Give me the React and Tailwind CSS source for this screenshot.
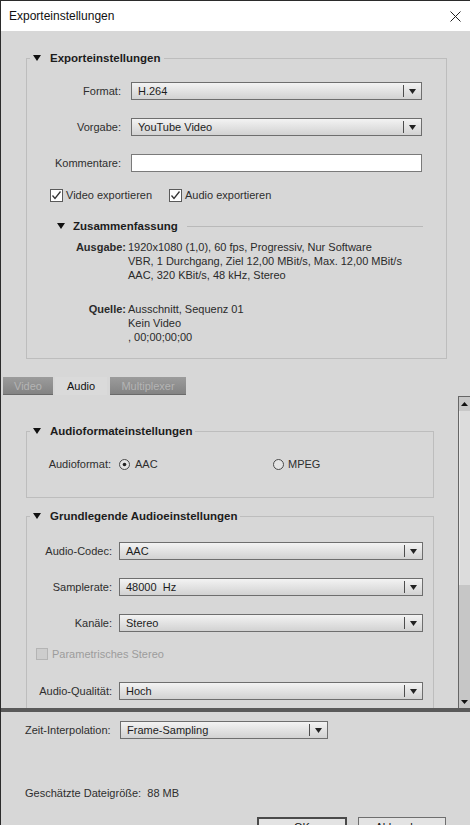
import React from 'react';

const Tri = ({ className = '' }) => (
  <svg width="8" height="6" viewBox="0 0 8 6" className={className}>
    <polygon points="0,0 8,0 4,6" fill="#111" />
  </svg>
);

const SmallArrow = () => (
  <svg width="7" height="5" viewBox="0 0 7 5">
    <polygon points="0,0 7,0 3.5,5" fill="#222" />
  </svg>
);

function Select({ value, className }) {
  return (
    <div className={`h-[18px] border border-[#6e6e6e] bg-linear-to-b from-[#f3f3f3] to-[#d2d2d2] flex items-center text-[#1c1c1c] ${className}`}>
      <span className="flex-1 pl-[6px] whitespace-pre">{value}</span>
      <span className="w-px h-[12px] bg-[#4d4d4d]" />
      <span className="w-[17px] flex justify-center">
        <SmallArrow />
      </span>
    </div>
  );
}

const Check = () => (
  <svg width="13" height="13" viewBox="0 0 13 13">
    <rect x="0.5" y="0.5" width="12" height="12" fill="#fff" stroke="#5a5a5a" />
    <path d="M2.5 6.5 L5 9.5 L10.5 2.5" fill="none" stroke="#333" strokeWidth="1.3" />
  </svg>
);

function Radio({ checked }) {
  return (
    <svg width="11" height="11" viewBox="0 0 11 11">
      <circle cx="5.5" cy="5.5" r="5" fill="#e4e4e4" stroke="#4a4a4a" />
      {checked && <circle cx="5.5" cy="5.5" r="1.8" fill="#222" />}
    </svg>
  );
}

function Legend({ children }) {
  return (
    <legend className="ml-[3px] px-[3px] h-[16px]">
      <span className="flex items-center h-[16px] gap-[9px] font-bold text-[11.5px] text-[#1c1c1c]">
        <Tri />
        {children}
      </span>
    </legend>
  );
}

function Row({ label, labelW, gap, children, className = '' }) {
  return (
    <div className={`flex items-center h-[18px] ${className}`}>
      <span className={`text-right text-[#2e2e2e] ${labelW}`}>{label}</span>
      <span className={gap} />
      {children}
    </div>
  );
}

export default function App() {
  return (
    <div className="w-[470px] h-[825px] overflow-hidden bg-[#d7d7d7] border-t border-l border-[#2b2b2b] flex flex-col font-['Liberation_Sans',Arial,sans-serif] text-[11px] leading-[14px]">
      {/* title bar */}
      <div className="h-[30px] shrink-0 bg-white flex items-center justify-between pl-[8px] pr-[8px]">
        <span className="text-[12px] text-[#111]">Exporteinstellungen</span>
        <svg width="11" height="11" viewBox="0 0 11 11" className="mr-[1px]">
          <path d="M0.5 0.5 L10.5 10.5 M10.5 0.5 L0.5 10.5" stroke="#222" strokeWidth="1" />
        </svg>
      </div>

      {/* export settings */}
      <fieldset className="ml-[25px] mt-[19px] w-[421px] border border-[#bdbdbd] pb-[14px] shrink-0">
        <Legend>Exporteinstellungen</Legend>
        <Row label="Format:" labelW="w-[94px]" gap="w-[10px]" className="mt-[16px]">
          <Select value="H.264" className="w-[291px]" />
        </Row>
        <Row label="Vorgabe:" labelW="w-[94px]" gap="w-[10px]" className="mt-[18px]">
          <Select value="YouTube Video" className="w-[291px]" />
        </Row>
        <Row label="Kommentare:" labelW="w-[94px]" gap="w-[10px]" className="mt-[18px]">
          <div className="w-[291px] h-[18px] bg-white border border-[#7a7a7a]" />
        </Row>
        <div className="flex items-center h-[14px] mt-[16px] pl-[23px] text-[#2e2e2e]">
          <Check />
          <span className="ml-[3px]">Video exportieren</span>
          <span className="ml-[17px]"><Check /></span>
          <span className="ml-[3px]">Audio exportieren</span>
        </div>
        <div className="flex items-center h-[16px] mt-[16px] pl-[30px] pr-[23px]">
          <Tri />
          <span className="ml-[8px] font-bold text-[11.5px] text-[#1c1c1c]">Zusammenfassung</span>
          <span className="ml-[9px] flex-1 h-px bg-[#b9b9b9]" />
        </div>
        <div className="grid grid-cols-[99px_1fr] gap-x-[2px] mt-[6px] text-[#2a2a2a]">
          <span className="text-right font-bold">Ausgabe:</span>
          <div className="flex flex-col">
            <span>1920x1080 (1,0), 60 fps, Progressiv, Nur Software</span>
            <span>VBR, 1 Durchgang, Ziel 12,00 MBit/s, Max. 12,00 MBit/s</span>
            <span>AAC, 320 KBit/s, 48 kHz, Stereo</span>
          </div>
          <span className="text-right font-bold mt-[20px]">Quelle:</span>
          <div className="flex flex-col mt-[20px]">
            <span>Ausschnitt, Sequenz 01</span>
            <span>Kein Video</span>
            <span>, 00;00;00;00</span>
          </div>
        </div>
      </fieldset>

      {/* tabs */}
      <div className="flex items-end h-[18px] mt-[18px] pl-[2px] shrink-0">
        <div className="w-[50px] h-[18px] flex items-center justify-center bg-linear-to-b from-[#9c9c9c] to-[#838383] border-b border-[#6a6a6a] text-[#b4b4b4]">Video</div>
        <div className="w-[52px] h-[18px] ml-[2px] flex items-center justify-center bg-[#dadada] text-[#111]">Audio</div>
        <div className="w-[76px] h-[18px] ml-[3px] flex items-center justify-center bg-linear-to-b from-[#9c9c9c] to-[#838383] border-b border-[#6a6a6a] text-[#b4b4b4]">Multiplexer</div>
      </div>

      {/* scroll area */}
      <div className="h-[312px] mt-[1px] flex shrink-0 overflow-hidden">
        <div className="flex-1 overflow-hidden">
          <fieldset className="ml-[25px] mt-[27px] w-[408px] border border-[#bdbdbd] pb-[25px]">
            <Legend>Audioformateinstellungen</Legend>
            <div className="flex items-center h-[16px] mt-[17px] text-[#2e2e2e]">
              <span className="w-[84px] text-right">Audioformat:</span>
              <span className="ml-[8px]"><Radio checked /></span>
              <span className="ml-[5px] w-[138px]">AAC</span>
              <Radio />
              <span className="ml-[4px]">MPEG</span>
            </div>
          </fieldset>
          <fieldset className="ml-[25px] mt-[10px] w-[408px] border border-[#bdbdbd] pb-[20px]">
            <Legend>Grundlegende Audioeinstellungen</Legend>
            <Row label="Audio-Codec:" labelW="w-[85px]" gap="w-[7px]" className="mt-[18px]">
              <Select value="AAC" className="w-[304px]" />
            </Row>
            <Row label="Samplerate:" labelW="w-[85px]" gap="w-[7px]" className="mt-[18px]">
              <Select value="48000  Hz" className="w-[304px]" />
            </Row>
            <Row label="Kanäle:" labelW="w-[85px]" gap="w-[7px]" className="mt-[18px]">
              <Select value="Stereo" className="w-[304px]" />
            </Row>
            <div className="flex items-center h-[14px] mt-[15px] pl-[9px]">
              <span className="w-[12px] h-[12px] border border-[#b4b4b4] bg-[#cdcdcd]" />
              <span className="ml-[4px] text-[#9c9c9c]">Parametrisches Stereo</span>
            </div>
            <Row label="Audio-Qualität:" labelW="w-[85px]" gap="w-[7px]" className="mt-[21px]">
              <Select value="Hoch" className="w-[304px]" />
            </Row>
          </fieldset>
        </div>
        {/* scrollbar */}
        <div className="w-[12px] h-full border-l border-[#666] flex flex-col">
          <div className="h-[15px] bg-[#c8c8c8] border-t border-[#666] flex items-center justify-center">
            <svg width="7" height="4" viewBox="0 0 7 4"><polygon points="0,4 7,4 3.5,0" fill="#111" /></svg>
          </div>
          <div className="h-[174px] bg-[#dcdcdc] border-l border-[#eaeaea]" />
          <div className="flex-1 bg-[#c6c6c6] flex items-end justify-center pb-[4px]">
            <svg width="7" height="4" viewBox="0 0 7 4"><polygon points="0,0 7,0 3.5,4" fill="#111" /></svg>
          </div>
        </div>
      </div>

      {/* divider */}
      <div className="h-[4px] bg-[#595959] shrink-0" />

      {/* bottom */}
      <div className="pl-[24px] shrink-0">
        <div className="flex items-center h-[18px] mt-[9px]">
          <span className="w-[95px] text-[#2e2e2e]">Zeit-Interpolation:</span>
          <Select value="Frame-Sampling" className="w-[208px]" />
        </div>
        <div className="h-[16px] mt-[46px] flex items-center text-[#2e2e2e]">Geschätzte Dateigröße:&nbsp; 88 MB</div>
        <div className="flex mt-[16px] pl-[232px]">
          <div className="w-[90px] h-[24px] border-2 border-[#4a4a4a] bg-[#e3e3e3] flex items-start justify-center pt-[1px] text-[#111]">OK</div>
          <div className="w-[88px] h-[24px] ml-[11px] border border-[#6e6e6e] bg-[#e3e3e3] flex items-start justify-center pt-[2px] text-[#111]">Abbrechen</div>
        </div>
      </div>
    </div>
  );
}
